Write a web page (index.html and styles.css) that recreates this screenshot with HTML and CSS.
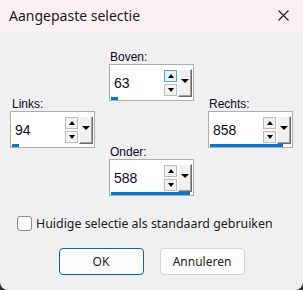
FILE: index.html
```html
<!DOCTYPE html>
<html lang="nl">
<head>
    <meta charset="UTF-8">
    <meta name="viewport" content="width=device-width, initial-scale=1.0">
    <title>Aangepaste selectie</title>
    <link rel="stylesheet" href="styles.css">
</head>
<body>
    <div class="window">
        <div class="titlebar">
            <span class="title">Aangepaste selectie</span>
            <span class="close">
                <svg width="11" height="11" viewBox="0 0 11 11">
                    <path d="M0.5 0.5 L10.5 10.5 M10.5 0.5 L0.5 10.5" stroke="#1b1b1b" stroke-width="1.1" fill="none"/>
                </svg>
            </span>
        </div>

        <div class="content">
            <div class="fields">
                <!-- left column -->
                <div class="col col-side">
                    <div class="field">
                        <div class="field-label label-links">Links:</div>
                        <div class="spin">
                            <div class="spin-row">
                                <span class="value">94</span>
                                <div class="arrows">
                                    <span class="arrow up"></span>
                                    <span class="arrow down"></span>
                                </div>
                                <span class="drop"></span>
                            </div>
                            <div class="bar"><span class="bar-fill" style="width: 7px"></span></div>
                        </div>
                    </div>
                </div>

                <!-- middle column -->
                <div class="col col-mid">
                    <div class="field">
                        <div class="field-label">Boven:</div>
                        <div class="spin">
                            <div class="spin-row">
                                <span class="value">63</span>
                                <div class="arrows">
                                    <span class="arrow up hover"></span>
                                    <span class="arrow down"></span>
                                </div>
                                <span class="drop"></span>
                            </div>
                            <div class="bar"><span class="bar-fill" style="width: 7px"></span></div>
                        </div>
                    </div>
                    <div class="field field-bottom">
                        <div class="field-label">Onder:</div>
                        <div class="spin">
                            <div class="spin-row">
                                <span class="value">588</span>
                                <div class="arrows">
                                    <span class="arrow up"></span>
                                    <span class="arrow down"></span>
                                </div>
                                <span class="drop"></span>
                            </div>
                            <div class="bar"><span class="bar-fill" style="width: 79px"></span></div>
                        </div>
                    </div>
                </div>

                <!-- right column -->
                <div class="col col-side">
                    <div class="field">
                        <div class="field-label label-rechts">Rechts:</div>
                        <div class="spin">
                            <div class="spin-row">
                                <span class="value">858</span>
                                <div class="arrows">
                                    <span class="arrow up"></span>
                                    <span class="arrow down"></span>
                                </div>
                                <span class="drop"></span>
                            </div>
                            <div class="bar"><span class="bar-fill" style="width: 73px"></span></div>
                        </div>
                    </div>
                </div>
            </div>

            <label class="check">
                <span class="check-box"></span>
                <span>Huidige selectie als standaard gebruiken</span>
            </label>

            <div class="buttons">
                <button class="btn btn-default">OK</button>
                <button class="btn">Annuleren</button>
            </div>
        </div>
    </div>
</body>
</html>
```

FILE: styles.css
```css
html {
    background: #2e2e2e;
}
body {
    margin: 0;
    font-family: "Noto Sans", Arial, sans-serif;
}
.window {
    width: 303px;
    height: 290px;
    background: #f0f0f0;
    border-radius: 0 0 8px 8px;
    overflow: hidden;
}
.titlebar {
    height: 32px;
    background: #f9f1f1;
    display: flex;
    align-items: center;
    justify-content: space-between;
    padding: 0 14px 0 9px;
    box-sizing: border-box;
}
.title {
    font-size: 14px;
    color: #1b1b1b;
    margin-top: -1px;
}
.close {
    display: flex;
    margin-top: -1px;
}
.content {
    padding-top: 18px;
}
.fields {
    display: flex;
    gap: 14px;
    padding-left: 10px;
}
.col {
    width: 85px;
    display: flex;
    flex-direction: column;
}
.col-side {
    padding-top: 47px;
}
.field-bottom {
    margin-top: 44px;
}
.field-label {
    font-family: "Liberation Sans", Arial, sans-serif;
    font-size: 12px;
    line-height: 14px;
    color: #0a0a1e;
    padding-left: 1px;
}
.label-links {
    padding-left: 2px;
}
.spin {
    height: 37px;
    box-sizing: border-box;
    border: 1px solid #adadad;
    background: #fff;
    display: flex;
    flex-direction: column;
}
.spin-row {
    height: 32px;
    display: flex;
    align-items: flex-start;
}
.value {
    flex: 1;
    font-family: "Liberation Sans", Arial, sans-serif;
    font-size: 14px;
    line-height: 16px;
    color: #0a0a1e;
    padding: 10px 0 0 4px;
}
.arrows {
    margin-top: 5px;
    display: flex;
    flex-direction: column;
    gap: 2px;
}
.arrow {
    width: 13px;
    height: 12px;
    box-sizing: border-box;
    border: 1px solid #bcbcbc;
    background: #f2f2f2;
    display: flex;
    align-items: center;
    justify-content: center;
}
.arrow.hover {
    border-color: #5ea1d8;
    background: #e5f1fb;
}
.arrow::after {
    content: "";
    width: 0;
    height: 0;
    border-left: 3.5px solid transparent;
    border-right: 3.5px solid transparent;
}
.arrow.up::after {
    border-bottom: 4px solid #000;
}
.arrow.down::after {
    border-top: 4px solid #000;
}
.drop {
    width: 14px;
    height: 28px;
    margin: 4px 1px 0 1px;
    box-sizing: border-box;
    background: #f0f0f0;
    border-top: 1px solid #fff;
    border-left: 1px solid #fff;
    border-right: 1px solid #6a6a6a;
    border-bottom: 1px solid #6a6a6a;
    box-shadow: inset -1px -1px 0 #a0a0a0;
    display: flex;
    justify-content: center;
    padding-top: 9px;
}
.drop::after {
    content: "";
    width: 0;
    height: 0;
    border-left: 4px solid transparent;
    border-right: 4px solid transparent;
    border-top: 4px solid #000;
}
.bar {
    height: 3px;
    padding-left: 1px;
}
.bar-fill {
    display: block;
    height: 3px;
    background: #0078d7;
}
.check {
    display: flex;
    align-items: center;
    gap: 4px;
    margin: 19px 0 0 17px;
    font-size: 12.4px;
    color: #1b1b1b;
    height: 16px;
}
.check-box {
    width: 15px;
    height: 15px;
    box-sizing: border-box;
    border: 1px solid #8a8a8a;
    border-radius: 3px;
    background: #fbfbfb;
}
.buttons {
    display: flex;
    justify-content: center;
    gap: 16px;
    margin-top: 17px;
}
.btn {
    width: 85px;
    height: 27px;
    font-family: "Noto Sans", Arial, sans-serif;
    font-size: 12px;
    color: #1b1b1b;
    background: #fdfdfd;
    border: 1px solid #d4d4d4;
    border-radius: 4px;
    padding: 0;
}
.btn-default {
    border-color: #0067c0;
}
```
